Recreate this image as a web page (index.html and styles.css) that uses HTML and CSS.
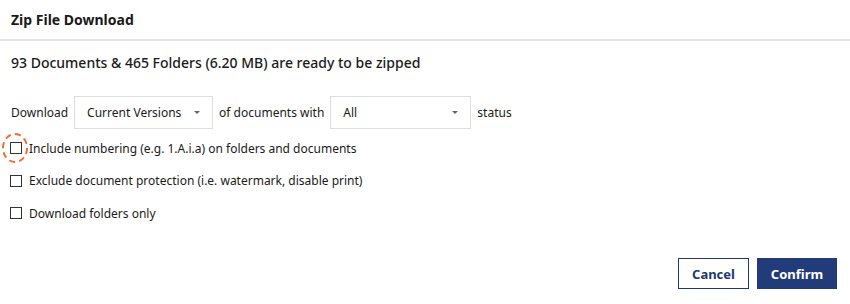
FILE: index.html
```html
<!DOCTYPE html>
<html lang="en">
<head>
  <meta charset="UTF-8">
  <title>Zip File Download</title>
  <link rel="stylesheet" href="styles.css">
</head>
<body>

  <div class="dialog">
    <header class="dialog-header">
      <h1>Zip File Download</h1>
    </header>

    <main class="dialog-body">
      <h2>93 Documents &amp; 465 Folders (6.20 MB) are ready to be zipped</h2>

      <div class="options-row">
        <span>Download</span>
        <div class="select select-version">
          <span>Current Versions</span>
          <span class="caret"></span>
        </div>
        <span>of documents with</span>
        <div class="select select-status">
          <span>All</span>
          <span class="caret"></span>
        </div>
        <span>status</span>
      </div>

      <ul class="checks">
        <li>
          <span class="box highlighted"></span>
          <span>Include numbering (e.g. 1.A.i.a) on folders and documents</span>
        </li>
        <li>
          <span class="box"></span>
          <span>Exclude document protection (i.e. watermark, disable print)</span>
        </li>
        <li>
          <span class="box"></span>
          <span>Download folders only</span>
        </li>
      </ul>
    </main>

    <footer class="dialog-footer">
      <button class="btn btn-cancel">Cancel</button>
      <button class="btn btn-confirm">Confirm</button>
    </footer>
  </div>

</body>
</html>
```

FILE: styles.css
```css
body {
  font-family: "Noto Sans", Arial, sans-serif;
  margin: 0;
  padding: 0;
  color: #1a1a1a;
  background: #fff;
}

.dialog {
  width: 850px;
  height: 304px;
  display: flex;
  flex-direction: column;
}

.dialog-header {
  height: 39px;
  border-bottom: 2px solid #e4e4e4;
  padding: 0 11px;
  display: flex;
  align-items: center;
}

.dialog-header h1 {
  margin: 0;
  font-size: 14px;
  font-weight: 700;
}

.dialog-body {
  padding: 0 11px;
  flex: 1;
}

.dialog-body h2 {
  margin: 11px 0 0;
  font-size: 14px;
  font-weight: 500;
  line-height: 22px;
}

.options-row {
  display: flex;
  align-items: center;
  gap: 6px;
  margin-top: 22px;
  font-size: 12px;
}

.select {
  height: 31px;
  border: 1px solid #dedede;
  display: flex;
  align-items: center;
  justify-content: space-between;
  padding: 0 12px;
}

.select-version {
  width: 113px;
}

.select-status {
  width: 115px;
}

.caret {
  width: 0;
  height: 0;
  border-left: 3px solid transparent;
  border-right: 3px solid transparent;
  border-top: 3px solid #666;
}

.checks {
  list-style: none;
  margin: 3px 0 0;
  padding: 0;
  font-size: 12px;
}

.checks li {
  display: flex;
  align-items: center;
  gap: 7px;
  height: 32.5px;
}

.box {
  width: 10px;
  height: 10px;
  border: 1px solid #333;
  position: relative;
  margin-left: -1px;
}

/* dashed marker drawn over the first checkbox */
.box.highlighted::after {
  content: "";
  position: absolute;
  left: -9px;
  top: -10px;
  width: 22px;
  height: 26px;
  border: 2px dashed #f26b2c;
  border-radius: 50%;
}

.dialog-footer {
  display: flex;
  justify-content: flex-end;
  gap: 8px;
  padding: 0 13px 15px 0;
}

.btn {
  height: 31px;
  font-family: inherit;
  font-size: 13px;
  font-weight: 700;
  cursor: pointer;
}

.btn-cancel {
  width: 71px;
  background: #fff;
  color: #21396f;
  border: 1px solid #21396f;
}

.btn-confirm {
  width: 80px;
  background: #213c78;
  color: #fff;
  border: 1px solid #213c78;
}
```
